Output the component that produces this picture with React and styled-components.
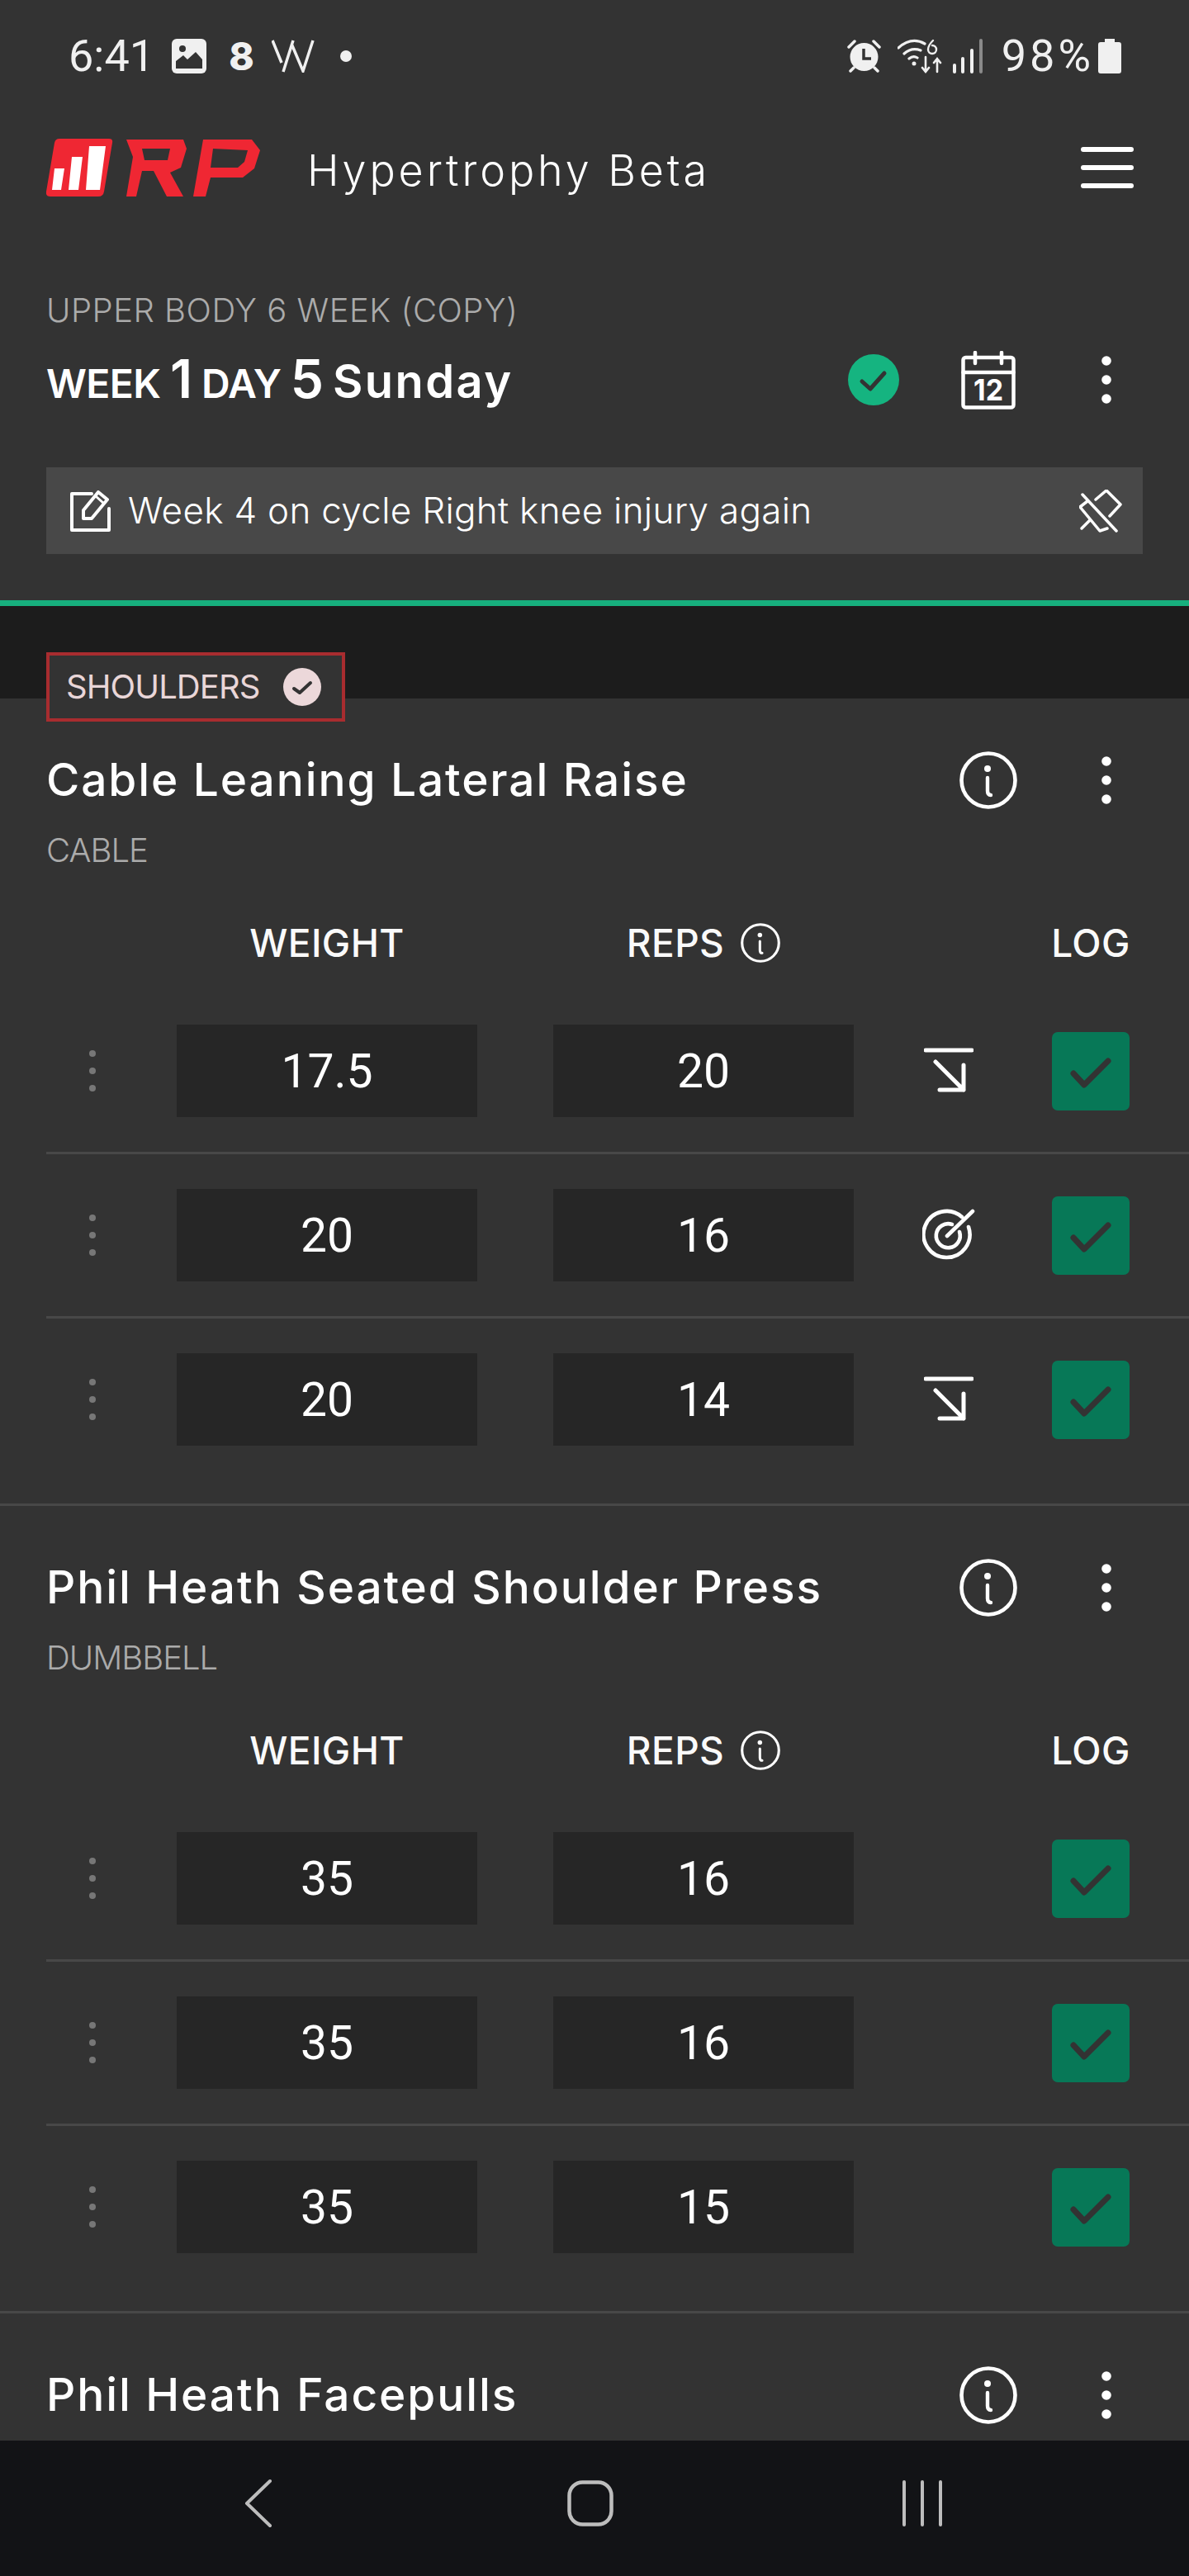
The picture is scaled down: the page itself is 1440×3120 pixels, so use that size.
import React from 'react';
import styled, { createGlobalStyle } from 'styled-components';

const Global = createGlobalStyle`
  html, body { margin: 0; padding: 0; background: #333; }
  * { box-sizing: border-box; }
`;

const FONT = `Inter, "Open Sans", "Liberation Sans", sans-serif`;

const Page = styled.div`
  width: 1440px; height: 3120px; display: flex; flex-direction: column;
  background: #333333; color: #fff; font-family: ${FONT}; overflow: hidden;
`;
const StatusBar = styled.div`
  height: 136px; flex: none; display: flex; align-items: center; justify-content: space-between;
  padding: 0 82px 0 83px; color: #f0f0f0; font-family: Roboto, sans-serif;
`;
const StatusGroup = styled.div`display: flex; align-items: center;`;
const StatusText = styled.span`
  font-size: 54px; line-height: 60px; letter-spacing: ${p => p.$ls || 0}px; margin-left: ${p => p.$ml || 0}px;
`;
const StatusDigit = styled.span`
  font-family: Inter, sans-serif; font-weight: 800; font-size: 46px; line-height: 46px; margin-left: ${p => p.$ml}px;
`;
const Glyph = styled.svg`
  display: block; flex: none; margin-left: ${p => p.$ml || 0}px;
`;
const AppBar = styled.header`
  height: 134px; flex: none; display: flex; align-items: center; padding: 0 67px 0 56px;
`;
const AppTitle = styled.div`
  margin-left: 54px; flex: 1; font-size: 52px; font-weight: 300; letter-spacing: 3.9px; line-height: 60px; padding-top: 8px;
`;
const Burger = styled.div`display: flex; flex-direction: column; gap: 16px; width: 64px;`;
const BurgerLine = styled.span`display: block; height: 6px; border-radius: 3px; background: #fff;`;
const WorkoutHead = styled.section`
  flex: none; height: 464px; padding: 86px 0 0 56px; display: flex; flex-direction: column;
  border-bottom: 7px solid #17b07e;
`;
const Program = styled.div`
  font-size: 40px; font-weight: 300; line-height: 40px; color: #ababab; letter-spacing: 0.5px;
`;
const DayRow = styled.div`
  margin-top: 29px; height: 70px; display: flex; align-items: center; padding-right: 94px;
`;
const DayTitle = styled.div`
  flex: 1; font-weight: 600; font-size: 48px; line-height: 70px; white-space: pre; padding-top: 4px; letter-spacing: -0.6px;
`;
const DayNum = styled.span`font-size: 64px; font-weight: 600;`;
const DayName = styled.span`font-size: 56px; font-weight: 600; letter-spacing: 2.4px;`;
const NoteBar = styled.div`
  margin-top: 71px; margin-right: 56px; height: 105px; background: #484848; display: flex; align-items: center; padding: 0 25px 0 29px;
`;
const NoteText = styled.div`
  flex: 1; margin-left: 20px; font-size: 44px; line-height: 60px; font-weight: 300; letter-spacing: 0.3px; padding-bottom: 2px;
`;
const Band = styled.div`
  flex: none; height: 112px; background: #1c1c1c; padding: 56px 0 0 56px;
`;
const MuscleTag = styled.div`
  position: relative; z-index: 1; display: inline-flex; align-items: center; height: 84px; width: 362px;
  border: 4px solid #a82c2f; background: #333; padding: 0 0 0 20px; color: #e9d6d8;
`;
const MuscleText = styled.span`font-size: 40px; line-height: 44px; font-weight: 400; flex: 1; letter-spacing: -0.9px;`;
const MuscleCheck = styled.svg`display: block; width: 46px; height: 46px; margin-right: 25px;`;
const Exercises = styled.div`flex: 1; min-height: 0; overflow: hidden;`;
const Exercise = styled.article`border-bottom: 3px solid #484848; padding: 64px 0 28px;`;
const ExerciseHead = styled.div`
  height: 70px; display: flex; align-items: center; padding: 0 94px 0 56px;
`;
const ExerciseName = styled.h2`
  flex: 1; margin: 0; font-size: 55px; line-height: 70px; font-weight: 500; letter-spacing: 1.9px; color: #fff; padding-bottom: 2px;
`;
const Equipment = styled.div`
  margin: 30px 0 0 56px; font-size: 40px; line-height: 40px; font-weight: 300; color: #ababab; letter-spacing: -1px;
`;
const Columns = styled.div`
  margin: 68px 0 0 214px; height: 48px; display: flex; align-items: center;
`;
const ColLabel = styled.div`
  width: ${p => p.$w}px; margin: 0 ${p => p.$mr || 0}px 0 ${p => p.$ml || 0}px; flex: none; display: flex; justify-content: center; align-items: center; gap: 20px;
  font-size: 46px; line-height: 48px; font-weight: 500; color: #fafafa; letter-spacing: 0.4px;
`;
const SetList = styled.div`margin-top: 33px; margin-left: 56px;`;
const SetRow = styled.div`
  height: ${p => p.$last ? 196 : 199}px; display: flex; align-items: center;
  ${p => p.$last ? '' : 'border-bottom: 3px solid #484848;'}
`;
const Handle = styled.div`
  width: 112px; margin-right: 46px; flex: none; display: flex; flex-direction: column; align-items: center; gap: 13px;
`;
const HandleDot = styled.span`width: 8px; height: 8px; border-radius: 50%; background: #777;`;
const ValueBox = styled.div`
  width: 364px; height: 112px; flex: none; margin-right: ${p => p.$mr || 0}px; background: #262626; display: flex; align-items: center; justify-content: center;
  font-family: Roboto, sans-serif; font-size: 57px; font-weight: 400; color: #fff;
`;
const Action = styled.div`
  width: 240px; flex: none; display: flex; justify-content: center; padding-right: 10px;
`;
const LogBox = styled.div`
  width: 94px; height: 95px; flex: none; border-radius: 7px; background: #077857; display: flex; align-items: center; justify-content: center;
`;
const NavBar = styled.nav`
  height: 164px; flex: none; background: #121316; display: grid; grid-template-columns: repeat(3, 402px); padding: 0 0 12px 112px; align-items: center; justify-items: center;
`;

const Dots = ({ ml = 0 }) => (
  <Glyph $ml={ml} width="12" height="58" viewBox="0 0 12 58" fill="#fff">
    <ellipse cx="6" cy="6" rx="5.8" ry="5.8" /><ellipse cx="6" cy="29" rx="5.8" ry="5.8" /><ellipse cx="6" cy="52" rx="5.8" ry="5.8" />
  </Glyph>
);
const Info = ({ size = 70, ml = 0 }) => (
  <Glyph $ml={ml} width={size} height={size} viewBox="0 0 70 70" fill="none" stroke="#fff" strokeLinecap="round">
    <circle cx="35" cy="35" r="32.5" strokeWidth="4.6" />
    <circle cx="34" cy="21" r="4" fill="#fff" stroke="none" />
    <path d="M34 32V48Q34 53 38 53" strokeWidth="4.4" />
  </Glyph>
);
const Check = () => (
  <svg width="94" height="95" viewBox="0 0 94 95" fill="none" stroke="#333" strokeWidth="7" strokeLinecap="round" strokeLinejoin="round">
    <path d="M26 50L39 64L68 35" />
  </svg>
);
const ArrowDown = () => (
  <Glyph width="60" height="56" viewBox="0 0 60 56" fill="none" stroke="#fff" strokeWidth="5" strokeLinecap="round" strokeLinejoin="round">
    <path d="M2 3H58M14 17L48 51M48 21V51H19" />
  </Glyph>
);
const Target = () => (
  <Glyph width="64" height="64" viewBox="0 0 64 64" fill="none" stroke="#fff" strokeWidth="4.6" strokeLinecap="round">
    <path d="M48 10A28 28 0 1 0 56 22" />
    <path d="M36 19A14.5 14.5 0 1 0 45 28" />
    <path d="M30 33L61 3" />
  </Glyph>
);
const ACTION = { down: <ArrowDown />, target: <Target /> };

const Logo = () => (
  <Glyph width="262" height="72" viewBox="56 167 262 72">
    <path d="M72 168H132Q137 168 136 173L126 232Q125 238 119 238H61Q55 238 56 232L66 173Q67 168 72 168Z" fill="#ef2733" />
    <path d="M66 204H78L74 230H63ZM87 190H100L95 230H83ZM108 177H128L121 230H104Z" fill="#fff" />
    <path fillRule="evenodd" fill="#ef2733" d="M153 169H222L226 180L219 203L206 209L222 238H202L186 207H172L165 238H153L161 190ZM172 180L175 194H203L206 180Z" />
    <path fillRule="evenodd" fill="#ef2733" d="M246 169H305L315 182L308 204L294 215H255L249 238H234ZM258 180L255 203H288L296 196L300 182Z" />
  </Glyph>
);

const SETS = (a, b) => a.map((w, i) => ({ w, r: b[i] }));
const EXERCISES = [
  { name: 'Cable Leaning Lateral Raise', eq: 'CABLE', sets: [
    { w: '17.5', r: '20', a: 'down' }, { w: '20', r: '16', a: 'target' }, { w: '20', r: '14', a: 'down' } ] },
  { name: 'Phil Heath Seated Shoulder Press', eq: 'DUMBBELL', sets: SETS(['35', '35', '35'], ['16', '16', '15']) },
  { name: 'Phil Heath Facepulls', eq: '', sets: [] },
];

export default function App() {
  return (
    <Page>
      <Global />
      <StatusBar>
        <StatusGroup>
          <StatusText>6:41</StatusText>
          <Glyph $ml={21} width="42" height="42" viewBox="0 0 42 42">
            <rect width="42" height="42" rx="6" fill="#f0f0f0" />
            <path d="M5 36V27L14 20L19 25L29 16L37 25V36Z" fill="#333" />
            <circle cx="13" cy="12" r="4" fill="#333" />
          </Glyph>
          <StatusDigit $ml={27}>8</StatusDigit>
          <Glyph $ml={21} width="52" height="40" viewBox="0 0 52 40" fill="none" stroke="#f0f0f0" strokeWidth="3.5">
            <path d="M1 1L12 28M26 1L14 39M24 5L38 38L50 1" />
          </Glyph>
          <Glyph $ml={31} width="14" height="14" viewBox="0 0 14 14"><circle cx="7" cy="7" r="7" fill="#f0f0f0" /></Glyph>
        </StatusGroup>
        <StatusGroup>
          <Glyph width="41" height="40" viewBox="0 0 41 40" fill="#f0f0f0">
            <path d="M2 9L9 2" stroke="#f0f0f0" strokeWidth="3.5" strokeLinecap="round" />
            <path d="M39 9L32 2" stroke="#f0f0f0" strokeWidth="3.5" strokeLinecap="round" />
            <circle cx="20.5" cy="21" r="17" />
            <path d="M8 34L4 38M33 34L37 38" stroke="#f0f0f0" strokeWidth="3.5" strokeLinecap="round" />
            <path d="M20 11V23H29" stroke="#333" strokeWidth="3.5" fill="none" />
          </Glyph>
          <Glyph $ml={20} width="54" height="42" viewBox="0 0 54 42" fill="none" stroke="#f0f0f0" strokeWidth="3.2" strokeLinecap="round">
            <path d="M1 11Q17 -3 33 6M8 18Q17 10 28 14M14 24Q19 20 24 23" />
            <circle cx="20" cy="30" r="2.5" fill="#f0f0f0" stroke="none" />
            <path d="M34 22V40M30 35L34 40L38 35M48 40V24M44 29L48 24L52 29" strokeWidth="2.6" />
            <path d="M43 2Q37 8 37 13A5 5 0 1 0 42 8" strokeWidth="2.4" />
          </Glyph>
          <Glyph $ml={13} width="37" height="42" viewBox="0 0 37 42">
            <rect x="0" y="30" width="4" height="12" rx="2" fill="#f0f0f0" />
            <rect x="10" y="22" width="4" height="20" rx="2" fill="#f0f0f0" />
            <rect x="21" y="12" width="4" height="30" rx="2" fill="#f0f0f0" />
            <rect x="32" y="0" width="4" height="42" rx="2" fill="#8a8a8a" />
          </Glyph>
          <StatusText $ml={22} $ls={4}>98%</StatusText>
          <Glyph $ml={5} width="28" height="42" viewBox="0 0 28 42">
            <path d="M8 0H20V4H25Q28 4 28 7V39Q28 42 25 42H3Q0 42 0 39V7Q0 4 3 4H8Z" fill="#f0f0f0" />
          </Glyph>
        </StatusGroup>
      </StatusBar>

      <AppBar>
        <Logo />
        <AppTitle>Hypertrophy Beta</AppTitle>
        <Burger><BurgerLine /><BurgerLine /><BurgerLine /></Burger>
      </AppBar>

      <WorkoutHead>
        <Program>UPPER BODY 6 WEEK (COPY)</Program>
        <DayRow>
          <DayTitle>WEEK <DayNum>1</DayNum> DAY <DayNum>5</DayNum> <DayName>Sunday</DayName></DayTitle>
          <Glyph width="62" height="62" viewBox="0 0 62 62" fill="none">
            <circle cx="31" cy="31" r="31" fill="#15b480" />
            <path d="M17 33L27 42L44 23" stroke="#333" strokeWidth="5" strokeLinecap="round" strokeLinejoin="round" />
          </Glyph>
          <Glyph $ml={75} width="66" height="71" viewBox="0 0 66 71" fill="none" stroke="#fff" strokeWidth="4.5" strokeLinecap="round">
            <rect x="2.5" y="8" width="61" height="60.5" rx="3" />
            <path d="M2.5 26H63.5M17 2V15M49 2V15" />
            <text x="15" y="60" fill="#fff" stroke="none" fontFamily="Inter, sans-serif" fontWeight="700" fontSize="36" textLength="36" lengthAdjust="spacingAndGlyphs">12</text>
          </Glyph>
          <Dots ml={104} />
        </DayRow>
        <NoteBar>
          <Glyph width="50" height="50" viewBox="84 593 50 50" fill="none" stroke="#fff" strokeWidth="4" strokeLinejoin="round" strokeLinecap="round">
            <path d="M110 597H86V641H131V615" />
            <path d="M100 627V617L118 595L129 604L110 627Z" />
            <path d="M115 600L125 609" strokeWidth="3" />
          </Glyph>
          <NoteText>Week 4 on cycle Right knee injury again</NoteText>
          <Glyph width="52" height="52" viewBox="1308 591 52 52" fill="none" stroke="#fff" strokeWidth="3.5" strokeLinecap="round" strokeLinejoin="round">
            <path d="M1312 597L1353 641" />
            <path d="M1328 603L1341 592L1358 609L1345 623" />
            <path d="M1318 605L1309 612L1333 641L1342 638" />
            <path d="M1321 628L1311 638" />
          </Glyph>
        </NoteBar>
      </WorkoutHead>

      <Band>
        <MuscleTag>
          <MuscleText>SHOULDERS</MuscleText>
          <MuscleCheck viewBox="0 0 46 46" fill="none">
            <circle cx="23" cy="23" r="23" fill="#ecd8da" />
            <path d="M13 25L20 30L33 18" stroke="#333" strokeWidth="4" strokeLinecap="round" strokeLinejoin="round" />
          </MuscleCheck>
        </MuscleTag>
      </Band>

      <Exercises>
        {EXERCISES.map((ex) => (
          <Exercise key={ex.name}>
            <ExerciseHead>
              <ExerciseName>{ex.name}</ExerciseName>
              <Info />
              <Dots ml={102} />
            </ExerciseHead>
            {ex.eq && (
              <>
                <Equipment>{ex.eq}</Equipment>
                <Columns>
                  <ColLabel $w={364} $mr={92}>WEIGHT</ColLabel>
                  <ColLabel $w={364}>REPS <Info size={48} /></ColLabel>
                  <ColLabel $w={94} $ml={240}>LOG</ColLabel>
                </Columns>
                <SetList>
                  {ex.sets.map((s, i) => (
                    <SetRow key={i} $last={i === ex.sets.length - 1}>
                      <Handle><HandleDot /><HandleDot /><HandleDot /></Handle>
                      <ValueBox $mr={92}>{s.w}</ValueBox>
                      <ValueBox>{s.r}</ValueBox>
                      <Action>{ACTION[s.a]}</Action>
                      <LogBox><Check /></LogBox>
                    </SetRow>
                  ))}
                </SetList>
              </>
            )}
          </Exercise>
        ))}
      </Exercises>

      <NavBar>
        <Glyph width="34" height="60" viewBox="0 0 34 60" fill="none" stroke="#bdbdbd" strokeWidth="4" strokeLinecap="round" strokeLinejoin="round">
          <path d="M31 3L3 30L31 57" />
        </Glyph>
        <Glyph width="56" height="56" viewBox="0 0 56 56" fill="none" stroke="#bdbdbd" strokeWidth="4.5">
          <rect x="2.5" y="2.5" width="51" height="51" rx="16" />
        </Glyph>
        <Glyph width="50" height="56" viewBox="0 0 50 56" fill="none" stroke="#bdbdbd" strokeWidth="4" strokeLinecap="round">
          <path d="M3 2V54M25 2V54M47 2V54" />
        </Glyph>
      </NavBar>
    </Page>
  );
}
